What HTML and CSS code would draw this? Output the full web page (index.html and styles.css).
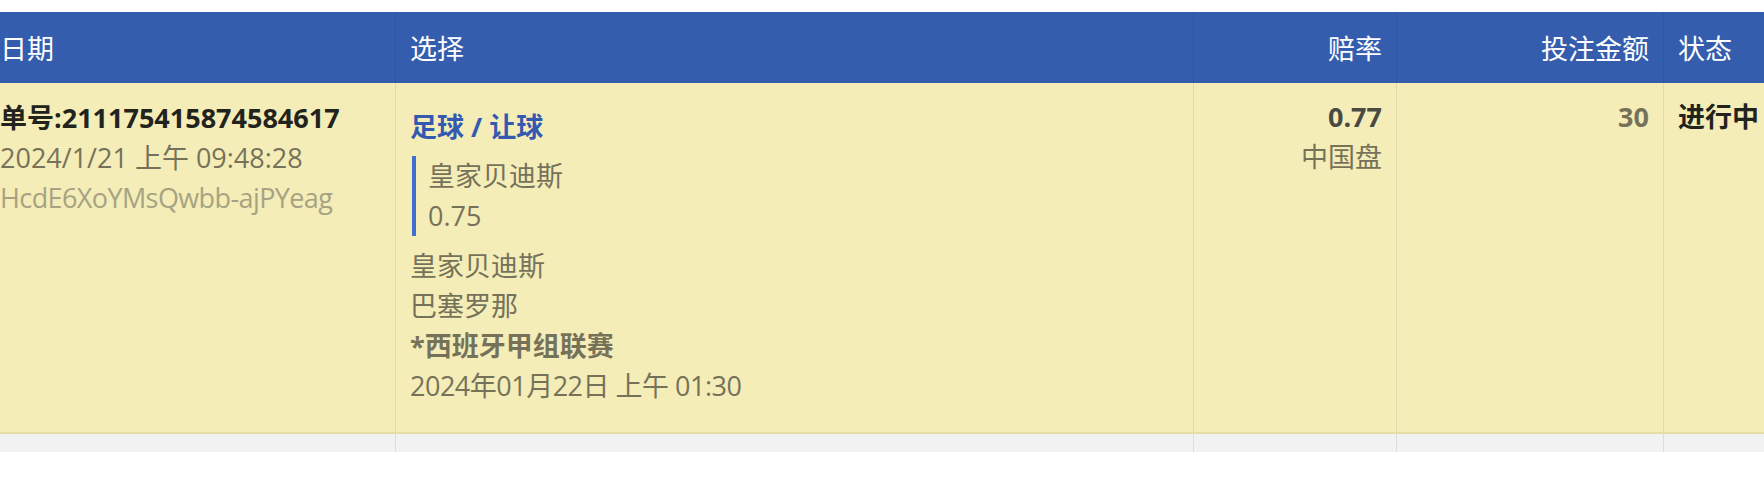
FILE: index.html
```html
<!DOCTYPE html>
<html lang="zh-CN">
<head>
<meta charset="utf-8">
<title>投注记录</title>
<link rel="stylesheet" href="styles.css">
</head>
<body>
<div class="wrap">
  <table class="bets">
    <colgroup>
      <col class="c-date">
      <col class="c-sel">
      <col class="c-odds">
      <col class="c-amt">
      <col class="c-state">
    </colgroup>
    <thead>
      <tr>
        <th class="first">日期</th>
        <th>选择</th>
        <th class="num">赔率</th>
        <th class="num">投注金额</th>
        <th>状态</th>
      </tr>
    </thead>
    <tbody>
      <tr class="row">
        <td class="first">
          <div class="order">单号:211175415874584617</div>
          <div class="muted">2024/1/21 上午 09:48:28</div>
          <div class="hash">HcdE6XoYMsQwbb-ajPYeag</div>
        </td>
        <td>
          <div class="sel">
            <div class="sel-title">足球 / 让球</div>
            <div class="pick">
              <div>皇家贝迪斯</div>
              <div>0.75</div>
            </div>
            <div class="muted">皇家贝迪斯</div>
            <div class="muted">巴塞罗那</div>
            <div class="league">*西班牙甲组联赛</div>
            <div class="muted tight">2024年01月22日 上午 01:30</div>
          </div>
        </td>
        <td class="num">
          <div class="odds">0.77</div>
          <div class="muted">中国盘</div>
        </td>
        <td class="num">
          <div class="amt">30</div>
        </td>
        <td>
          <div class="state">进行中</div>
        </td>
      </tr>
      <tr class="gap">
        <td class="first"></td>
        <td></td>
        <td></td>
        <td></td>
        <td></td>
      </tr>
    </tbody>
  </table>
</div>
</body>
</html>
```

FILE: styles.css
```css
html, body {
  margin: 0;
  padding: 0;
  background: #ffffff;
}

body {
  font-family: "Open Sans", "Noto Sans CJK SC", sans-serif;
  font-size: 27px;
  line-height: 40px;
  color: #76725a;
}

.wrap {
  width: 1764px;
  overflow: hidden;
  padding-top: 12px;
}

.bets {
  margin-left: -14px;
  border-collapse: separate;
  border-spacing: 0;
  table-layout: fixed;
  width: 1807px;
}

.c-date { width: 409px; }
.c-sel { width: 798px; }
.c-odds { width: 203px; }
.c-amt { width: 267px; }
.c-state { width: 130px; }

th {
  background: #355dae;
  color: #ffffff;
  font-weight: normal;
  text-align: left;
  padding: 17px 14px 14px 14px;
  border-left: 1px solid #3055a2;
  white-space: nowrap;
}

th.first {
  border-left: none;
}

th.num, td.num {
  text-align: right;
}

.row td {
  background: #f4edb8;
  vertical-align: top;
  padding: 14px 14px 14px 14px;
  border-left: 1px solid #e2dba9;
  border-bottom: 2px solid #e6dea8;
  white-space: nowrap;
}

.row td.first {
  border-left: none;
  padding-top: 15px;
}

.gap td {
  height: 18px;
  padding: 0;
  background: #f2f2f2;
  border-left: 1px solid #dddddd;
}

.gap td.first {
  border-left: none;
}

.order {
  font-weight: bold;
  color: #23231e;
}

.muted {
  color: #76725a;
}

.tight {
  letter-spacing: -0.5px;
}

.hash {
  color: #a7a382;
  letter-spacing: -0.6px;
}

.sel {
  margin: 10px 0 12px 0;
}

.sel-title {
  color: #3459b0;
  font-weight: bold;
  margin-bottom: 9px;
}

.pick {
  margin: 0 0 10px 2px;
  border-left: 4px solid #3f6fd0;
  padding-left: 12px;
  color: #76725a;
}

.league {
  font-weight: bold;
  color: #76725a;
}

.odds {
  font-weight: bold;
  color: #4a4a42;
}

.amt {
  font-weight: bold;
  color: #76725a;
}

.state {
  font-weight: bold;
  color: #23231e;
}
```
